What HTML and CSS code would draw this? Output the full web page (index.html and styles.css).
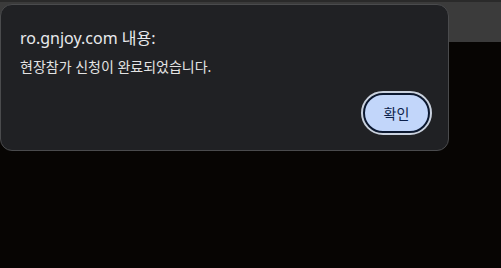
FILE: index.html
```html
<!DOCTYPE html>
<html lang="ko">
<head>
<meta charset="utf-8">
<link rel="stylesheet" href="styles.css">
</head>
<body>
<div class="page">
  <div class="topbar"></div>
  <div class="content"></div>
</div>
<div class="dialog" role="alertdialog">
  <div class="title">ro.gnjoy.com 내용:</div>
  <div class="message">현장참가 신청이 완료되었습니다.</div>
  <div class="actions">
    <button class="ok">확인</button>
  </div>
</div>
</body>
</html>
```
FILE: styles.css
```css
html, body {
  margin: 0;
  padding: 0;
  width: 501px;
  height: 268px;
  overflow: hidden;
  background: #070503;
  font-family: "Noto Sans", "Noto Sans CJK KR", sans-serif;
}
.page {
  display: flex;
  flex-direction: column;
  height: 268px;
}
.topbar {
  height: 40px;
  border-top: 2px solid #2a2a2a;
  background: #3b3b3b;
}
.content {
  flex: 1;
  background: #070503;
}
.dialog {
  position: absolute;
  left: 0;
  top: 4px;
  width: 449px;
  height: 147px;
  box-sizing: border-box;
  border: 1px solid #4a4b4d;
  border-radius: 12px;
  background: #202124;
  padding: 23px 18px 0 19px;
  display: flex;
  flex-direction: column;
}
.title {
  color: #e8eaed;
  font-size: 16px;
  line-height: 20px;
}
.message {
  color: #e3e3e3;
  font-size: 14px;
  line-height: 18px;
  margin-top: 10px;
}
.actions {
  display: flex;
  justify-content: flex-end;
  margin-top: 17px;
}
.ok {
  width: 67px;
  height: 40px;
  box-sizing: border-box;
  border: 2px solid #0b1830;
  outline: 2px solid #c9d1de;
  border-radius: 20px;
  background: #c2d6fa;
  color: #0b1f4a;
  font-family: "Noto Sans CJK KR", sans-serif;
  font-size: 14px;
  padding: 0;
}
```
